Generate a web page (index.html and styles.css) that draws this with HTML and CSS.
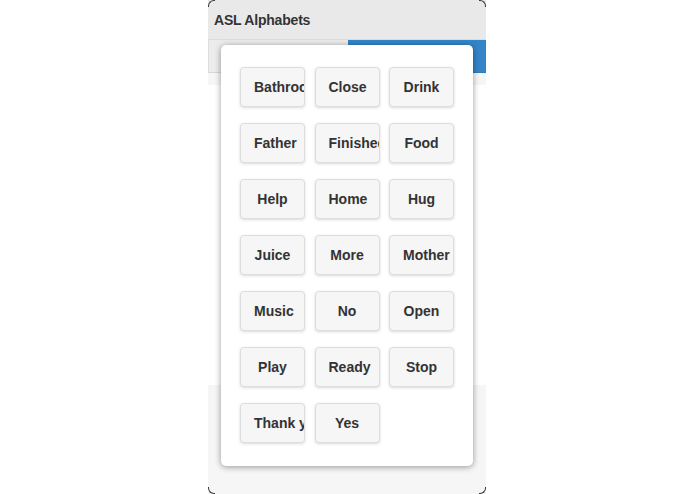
FILE: index.html
```html
<!DOCTYPE html>
<html lang="en">
<head>
<meta charset="utf-8">
<title>ASL Alphabets</title>
<link rel="stylesheet" href="styles.css">
</head>
<body>
<div class="stage">
  <div class="phone">
    <span class="corner tl"></span><span class="corner tr"></span>
    <span class="corner bl"></span><span class="corner br"></span>
    <header class="header">ASL Alphabets</header>
    <nav class="navbar">
      <div class="tab"></div>
      <div class="tab active"></div>
    </nav>
    <main class="content">
      <div class="band"></div>
      <div class="blank"></div>
      <div class="footer"></div>
    </main>
    <div class="popup">
      <div class="grid">
        <button class="btn">Bathroom</button>
        <button class="btn">Close</button>
        <button class="btn">Drink</button>
        <button class="btn">Father</button>
        <button class="btn">Finished</button>
        <button class="btn">Food</button>
        <button class="btn">Help</button>
        <button class="btn">Home</button>
        <button class="btn">Hug</button>
        <button class="btn">Juice</button>
        <button class="btn">More</button>
        <button class="btn">Mother</button>
        <button class="btn">Music</button>
        <button class="btn">No</button>
        <button class="btn">Open</button>
        <button class="btn">Play</button>
        <button class="btn">Ready</button>
        <button class="btn">Stop</button>
        <button class="btn">Thank you</button>
        <button class="btn">Yes</button>
      </div>
    </div>
  </div>
</div>
</body>
</html>
```

FILE: styles.css
```css
html, body {
  margin: 0;
  padding: 0;
  background: #ffffff;
  font-family: "Liberation Sans", Arial, sans-serif;
  color: #333333;
}

.stage {
  width: 695px;
  height: 494px;
  display: flex;
  justify-content: flex-start;
  padding-left: 208px;
  box-sizing: border-box;
}

.phone {
  position: relative;
  width: 278px;
  height: 494px;
  display: flex;
  flex-direction: column;
  background: #ffffff;
}

.corner {
  position: absolute;
  width: 6px;
  height: 6px;
  border: 0 solid #3a3a3a;
}
.corner.tl { left: 0; top: 0; border-top-width: 1px; border-left-width: 1px; border-top-left-radius: 6px; }
.corner.tr { right: 0; top: 0; border-top-width: 1px; border-right-width: 1px; border-top-right-radius: 6px; }
.corner.bl { left: 0; bottom: 0; border-bottom-width: 1px; border-left-width: 1px; border-bottom-left-radius: 6px; }
.corner.br { right: 0; bottom: 0; border-bottom-width: 1px; border-right-width: 1px; border-bottom-right-radius: 6px; }

.header {
  height: 40px;
  box-sizing: border-box;
  background: #e9e9e9;
  border-bottom: 1px solid #dddddd;
  padding: 0 6px;
  display: flex;
  align-items: center;
  font-size: 14px;
  font-weight: bold;
  letter-spacing: -0.2px;
  color: #333333;
  text-shadow: 0 1px 0 #eeeeee;
}

.navbar {
  height: 33px;
  display: flex;
}

.tab {
  flex: 1;
  background: #ececec;
  border-bottom: 1px solid #d6d6d6;
  border-left: 1px solid #dddddd;
}

.tab.active {
  background: #3385c8;
  border-bottom-color: #2f7bbb;
  border-left: 0;
}

.content {
  flex: 1;
  display: flex;
  flex-direction: column;
}

.band {
  height: 12px;
  background: #f6f6f6;
}

.blank {
  height: 300px;
  background: #ffffff;
}

.footer {
  flex: 1;
  background: #f6f6f6;
}

.popup {
  position: absolute;
  left: 13px;
  top: 45px;
  width: 252px;
  height: 421px;
  box-sizing: border-box;
  background: #ffffff;
  border-radius: 5px;
  box-shadow: 0 1px 6px rgba(0, 0, 0, 0.4);
  padding: 22px 19px 23px 19px;
}

.grid {
  display: grid;
  grid-template-columns: repeat(3, 65px);
  grid-auto-rows: 40px;
  column-gap: 9.5px;
  row-gap: 16px;
}

.btn {
  width: 65px;
  height: 40px;
  box-sizing: border-box;
  margin: 0;
  padding: 0 13px;
  background: #f6f6f6;
  border: 1px solid #dddddd;
  border-radius: 4px;
  box-shadow: 0 1px 3px rgba(0, 0, 0, 0.15);
  font-family: "Liberation Sans", Arial, sans-serif;
  font-size: 14px;
  font-weight: bold;
  color: #333333;
  text-shadow: 0 1px 0 #f3f3f3;
  white-space: nowrap;
  overflow: hidden;
  text-align: center;
  display: block;
}
```
